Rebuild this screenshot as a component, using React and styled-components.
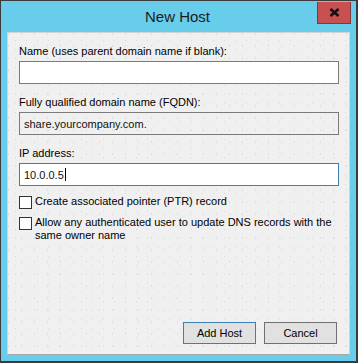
import React from "react";
import styled, { createGlobalStyle } from "styled-components";

const GlobalStyle = createGlobalStyle`
  html, body {
    margin: 0;
    padding: 0;
    background: #ffffff;
  }
  body {
    font-family: "Liberation Sans", Arial, sans-serif;
  }
`;

const Window = styled.div`
  box-sizing: border-box;
  width: 358px;
  height: 363px;
  display: flex;
  flex-direction: column;
  background: #68cceb;
  border-style: solid;
  border-color: #3b3b3b;
  border-width: 1px 2px 2px 1px;
`;

const TitleBar = styled.div`
  height: 31px;
  display: grid;
  grid-template-columns: 1fr auto 1fr;
  align-items: start;
`;

const Title = styled.div`
  grid-column: 2;
  font-size: 15px;
  line-height: 31px;
  color: #1c1c1c;
  padding-right: 2px;
`;

const CloseButton = styled.button`
  grid-column: 3;
  justify-self: end;
  box-sizing: border-box;
  width: 34px;
  height: 22px;
  margin: 1px 5px 0 0;
  padding: 0;
  display: flex;
  align-items: center;
  justify-content: center;
  background: #c75050;
  border: 1px solid #7c3a3a;
  border-top: none;
`;

const Body = styled.div`
  box-sizing: border-box;
  flex: 1;
  margin: 0 6px 6px 6px;
  padding: 10px 10px 0 11px;
  display: flex;
  flex-direction: column;
  background-color: #f0f0f0;
  background-image:
    radial-gradient(circle, #dadada 0.6px, transparent 1px),
    radial-gradient(circle, #dedede 0.6px, transparent 1px);
  background-size: 11px 9px, 13px 12px;
  background-position: 2px 3px, 7px 7px;
  border: 1px solid #d4d4d4;
  border-bottom-color: #a9a9a9;
  font-size: 11px;
  color: #000;
`;

const Field = styled.div`
  display: flex;
  flex-direction: column;
  margin-bottom: 10px;
`;

const Label = styled.div`
  line-height: 16px;
  margin-bottom: 2px;
`;

const TextBox = styled.div`
  box-sizing: border-box;
  width: 320px;
  height: 23px;
  padding: 0 0 0 4px;
  display: flex;
  align-items: center;
  background: ${(p) => (p.$readOnly ? "transparent" : "#ffffff")};
  border: 1px solid ${(p) => (p.$focused ? "#3c7fb1" : "#7a7a7a")};
  color: #111;
`;

const Caret = styled.span`
  display: inline-block;
  width: 1px;
  height: 13px;
  margin-left: 1px;
  background: #000;
`;

const CheckRow = styled.label`
  display: flex;
  align-items: flex-start;
  gap: 3px;
  margin-bottom: 8px;
  line-height: 13px;
`;

const CheckBox = styled.span`
  box-sizing: border-box;
  flex: none;
  width: 13px;
  height: 13px;
  background: #ffffff;
  border: 1px solid #333333;
`;

const CheckText = styled.span`
  white-space: nowrap;
  margin-top: -1px;
`;

const ButtonRow = styled.div`
  margin-top: auto;
  margin-bottom: 10px;
  display: flex;
  justify-content: flex-end;
  gap: 8px;
  padding-right: 2px;
`;

const Button = styled.button`
  box-sizing: border-box;
  width: 73px;
  height: 22px;
  padding: 0;
  font-family: inherit;
  font-size: 11px;
  color: #000;
  background: #e1e1e1;
  border: 1px solid ${(p) => (p.$primary ? "#3c7fb1" : "#707070")};
`;

const CloseIcon = () => (
  <svg width="11" height="9" viewBox="0 0 11 9">
    <path d="M1.5 1 L9.5 8 M9.5 1 L1.5 8" stroke="#111" strokeWidth="2.6" />
  </svg>
);

export default function App() {
  return (
    <>
      <GlobalStyle />
      <Window>
        <TitleBar>
          <Title>New Host</Title>
          <CloseButton aria-label="Close">
            <CloseIcon />
          </CloseButton>
        </TitleBar>
        <Body>
          <Field>
            <Label>Name (uses parent domain name if blank):</Label>
            <TextBox />
          </Field>
          <Field>
            <Label>Fully qualified domain name (FQDN):</Label>
            <TextBox $readOnly>share.yourcompany.com.</TextBox>
          </Field>
          <Field>
            <Label>IP address:</Label>
            <TextBox $focused>
              10.0.0.5
              <Caret />
            </TextBox>
          </Field>
          <CheckRow>
            <CheckBox />
            <CheckText>Create associated pointer (PTR) record</CheckText>
          </CheckRow>
          <CheckRow>
            <CheckBox />
            <CheckText>
              Allow any authenticated user to update DNS records with the
              <br />
              same owner name
            </CheckText>
          </CheckRow>
          <ButtonRow>
            <Button $primary>Add Host</Button>
            <Button>Cancel</Button>
          </ButtonRow>
        </Body>
      </Window>
    </>
  );
}
